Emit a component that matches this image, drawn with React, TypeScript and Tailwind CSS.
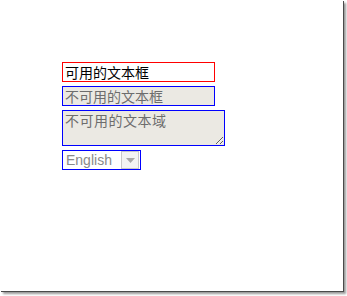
import React from 'react';

const cjk = "font-['Noto_Sans_CJK_SC','Noto_Sans',sans-serif]";

const App: React.FC = () => {
  return (
    <div className="w-[347px] h-[296px] bg-white">
      <div className="w-[343px] h-[291px] bg-white shadow-[1px_1px_0_#4a4a4a,3px_3px_2px_#9a9a9a] pt-[62px] pl-[62px]">
        <div className="flex flex-col gap-[4px] items-start">
          <input
            defaultValue="可用的文本框"
            className={`w-[153px] h-[20px] border border-[#ff0000] bg-white px-[2px] text-[14px] leading-[18px] text-black outline-none ${cjk}`}
          />
          <input
            disabled
            defaultValue="不可用的文本框"
            className={`w-[153px] h-[20px] border border-[#0000ff] bg-[#ebe9e3] px-[2px] text-[14px] leading-[18px] text-[#6d6d6d] outline-none ${cjk}`}
          />
          <textarea
            disabled
            defaultValue="不可用的文本域"
            className={`w-[163px] h-[36px] border border-[#0000ff] bg-[#ebe9e3] px-[2px] py-0 text-[14px] leading-[18px] tracking-[0.5px] text-[#6d6d6d] outline-none ${cjk}`}
          />
          <div className="flex w-[79px] h-[20px] border border-[#0000ff] bg-white items-center">
            <select
              disabled
              className="appearance-none flex-1 min-w-0 h-full bg-white pl-[3px] text-[14px] leading-[18px] text-[#8a8a8a] outline-none font-['Liberation_Sans',Arial,sans-serif]"
            >
              <option>English</option>
            </select>
            <div className="w-[18px] h-[18px] mr-px border border-[#c8c8c8] bg-[#f3f3f3] flex items-center justify-center">
              <svg width="9" height="5" viewBox="0 0 9 5">
                <path d="M0 0h9L4.5 5z" fill="#a8a8a8" />
              </svg>
            </div>
          </div>
        </div>
      </div>
    </div>
  );
};

export default App;
